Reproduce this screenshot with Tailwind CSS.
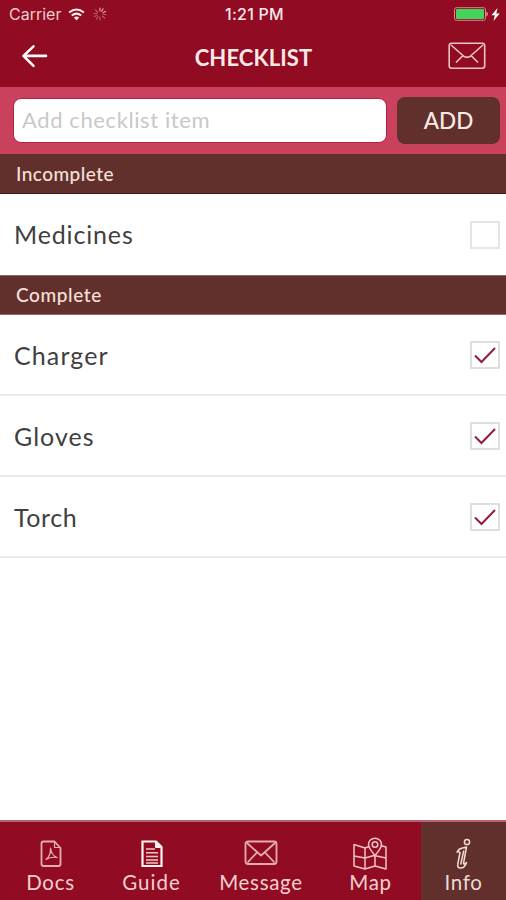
<!DOCTYPE html>
<html lang="en">
<head>
<meta charset="utf-8">
<title>Checklist</title>
<script src="https://cdn.jsdelivr.net/npm/@tailwindcss/browser@4"></script>
</head>
<body class="bg-white">
<div class="w-[506px] h-[900px] flex flex-col overflow-hidden bg-white font-['Lato',sans-serif] text-[#3f3f41]">
  <header class="h-[87px] shrink-0 bg-[#910b23] text-[#fbe9e8]">
    <div class="h-7 grid grid-cols-3 items-center pl-[9px] pr-[6px] font-['Inter',sans-serif] text-[16px] leading-7">
      <div class="flex items-center">
        <span class="w-[53px] text-[#f0cccd] whitespace-nowrap">Carrier</span>
        <svg class="ml-[6px] w-[17px] h-[13px]" viewBox="0 0 17 13" fill="none" stroke="#fbe9e8" stroke-width="2"><path d="M1 4.6Q8.500-1.600 16 4.600M3.700 7.500Q8.500 3.700 13.300 7.500"/><path d="M8.500 12.500 5.800 9.600Q8.500 7.500 11.200 9.600Z" fill="#fbe9e8" stroke="none"/></svg>
        <svg class="ml-2 w-[14px] h-[14px]" viewBox="0 0 14 14" stroke="#e4a5aa" stroke-width="1.200" stroke-linecap="round"><path d="M7 1v3M10 1.800 8.700 4.300M12.500 4.500 10 5.800"/><path stroke="#bd5b6b" d="M13 7.500h-3M11.800 11 9.600 9.200M7 13v-3M3.500 12 5 9.500M1.300 9.500 4 8.300M1 6.500h3M2.500 3 4.500 5"/></svg>
      </div>
      <span class="text-center font-medium tracking-[0.25px] whitespace-nowrap">1:21 PM</span>
      <div class="flex justify-end items-center">
        <svg class="w-[35px] h-[14px]" viewBox="0 0 35 14"><rect x=".5" y=".7" width="31" height="12.600" rx="2" fill="none" stroke="#d58a8d"/><rect x="2" y="2" width="28" height="10" rx="1" fill="#43d45c"/><path d="M32.500 4.500q2.500 2.500 0 5z" fill="#f3d0d0"/></svg>
        <svg class="ml-0.5 w-[9px] h-[13px]" viewBox="0 0 9 13" fill="#fff"><path d="M6.500 0 .5 7.200h3.300L2.500 13 8.700 5.500H5.300z"/></svg>
      </div>
    </div>
    <div class="h-[56px] grid grid-cols-3 items-center pl-[21px] pr-5">
      <svg class="w-[27px] h-6" viewBox="0 0 27 24" fill="none" stroke="#fff" stroke-width="2.600" stroke-linecap="round" stroke-linejoin="round"><path d="M25 11.900H3M12.500 2.400 2.500 11.900 12.500 21.900"/></svg>
      <h1 class="pt-[3px] text-center text-[22px] leading-7 font-bold tracking-[0.1px] whitespace-nowrap">CHECKLIST</h1>
      <svg class="justify-self-end w-[38px] h-7" viewBox="0 0 38 28" fill="none" stroke="#efc3c5" stroke-width="1.600" stroke-linejoin="round"><rect x="1.200" y="1.200" width="35.500" height="25" rx="2.500"/><path d="M3 3 15.500 14q1.300 1.400 2.300.8 1.200 1.200 2.400 0 1 .6 2.300-.8L35 3M8 20.500l7-7M30 20.500l-7-7"/></svg>
    </div>
  </header>

  <form class="h-[67px] shrink-0 bg-[#c9415d] flex items-start pt-[11px] pl-[13px] pr-[6px]">
    <input type="text" placeholder="Add checklist item" class="block w-[374px] h-[45px] rounded-lg border border-[#b91d48] bg-white px-2 text-[22px] leading-7 pb-[3px] tracking-[0.6px] placeholder:text-[#c8c8ca]">
    <button type="button" class="ml-[10px] w-[103px] h-[47px] -mt-px rounded-lg bg-[#61302d] text-[#faeae2] text-[22.5px] leading-7 font-medium">ADD</button>
  </form>

  <h2 class="h-10 shrink-0 bg-[#61302d] border-b border-[#401512] px-4 text-[19px] leading-[40px] tracking-[0.45px] text-[#f7e0d9] font-medium">Incomplete</h2>
  <div class="h-[81px] shrink-0 flex items-center justify-between pl-[14px] pr-[6px]">
    <span class="pb-0.5 text-[25px] leading-8 tracking-[0.85px]">Medicines</span>
    <span class="w-[30px] h-[28px] border-2 border-[#e5e5e6]"></span>
  </div>
  <h2 class="h-10 shrink-0 bg-[#61302d] border-y border-[#8c6965] px-4 text-[19px] leading-[38px] tracking-[0.6px] text-[#f7e0d9] font-medium">Complete</h2>
  <div class="h-[81px] shrink-0 flex items-center justify-between pl-[14px] pr-[6px] border-b-2 border-[#ebebec]">
    <span class="text-[25px] leading-8 tracking-[1.1px]">Charger</span>
    <span class="w-[30px] h-[28px] border-2 border-[#dfdfe0]"><svg class="w-[26px] h-6" viewBox="0 0 26 24" fill="none" stroke="#951b38" stroke-width="2"><path d="M3 12.500 9.500 19 23 5"/></svg></span>
  </div>
  <div class="h-[81px] shrink-0 flex items-center justify-between pl-[14px] pr-[6px] border-b-2 border-[#ebebec]">
    <span class="text-[25px] leading-8 tracking-[1px]">Gloves</span>
    <span class="w-[30px] h-[28px] border-2 border-[#dfdfe0]"><svg class="w-[26px] h-6" viewBox="0 0 26 24" fill="none" stroke="#951b38" stroke-width="2"><path d="M3 12.500 9.500 19 23 5"/></svg></span>
  </div>
  <div class="h-[81px] shrink-0 flex items-center justify-between pl-[14px] pr-[6px] border-b-2 border-[#ebebec]">
    <span class="text-[25px] leading-8 tracking-[0.6px]">Torch</span>
    <span class="w-[30px] h-[28px] border-2 border-[#dfdfe0]"><svg class="w-[26px] h-6" viewBox="0 0 26 24" fill="none" stroke="#951b38" stroke-width="2"><path d="M3 12.500 9.500 19 23 5"/></svg></span>
  </div>

  <nav class="mt-auto h-[80px] shrink-0 border-t-2 border-[#b9616e] bg-[#910b23] flex text-[20.5px] leading-6 tracking-[0.7px] text-[#f4cfd0]">
    <div class="w-[101px] flex flex-col items-center pt-[18px]">
      <svg class="w-[22px] h-[28px]" viewBox="0 0 22 28" fill="none" stroke="#e7aeb2" stroke-width="1.800" stroke-linejoin="round"><path d="M3.500 1.500h11L20.500 8v16q0 2-2 2h-15q-2 0-2-2v-20.500q0-2 2-2z"/><path d="M14.500 2v5.500h5" stroke-width="1.200"/><path d="M6 19.500q5-4 4.500-11.500 1 7.500 6.500 9.500-6-1-11 2z" stroke-width="1.200"/></svg>
      <span class="mt-0.5 whitespace-nowrap">Docs</span>
    </div>
    <div class="w-[101px] flex flex-col items-center pt-[18px]">
      <svg class="w-[22px] h-[28px]" viewBox="0 0 22 28" fill="none" stroke="#fff1ee" stroke-width="2.200"><path d="M1.500 1.500h13.500L20.500 7v19h-19z"/><path d="M14.500 2v5.500h6z" fill="#fff1ee" stroke-width="1"/><path d="M5 9h9M5 12.700h12M5 16.400h12M5 20.100h12M5 23h12" stroke-width="1.500" stroke="#f3c6c7"/></svg>
      <span class="mt-0.5 tracking-[1px] whitespace-nowrap">Guide</span>
    </div>
    <div class="w-[118px] flex flex-col items-center pt-[17px]">
      <svg class="w-[34px] h-[28px]" viewBox="0 0 34 28" fill="none" stroke="#e7aeb2" stroke-width="1.800" stroke-linejoin="round"><rect x="1.500" y="2.500" width="31" height="22.500" rx="2.500"/><path d="M3 4 13 13l4 3.500 4-3.500L31 4M3.500 23.500 13 13.500M30.500 23.500 21 13.500"/></svg>
      <span class="mt-[3px] whitespace-nowrap">Message</span>
    </div>
    <div class="w-[101px] flex flex-col items-center pt-[15px]">
      <svg class="w-[36px] h-[34px] mr-0.5" viewBox="0 0 36 34" fill="none" stroke="#f0c3c4" stroke-width="1.500" stroke-linejoin="round"><path d="M17 9.500 13 11 2 7.500V29l11 3 10-3 11 3V10l-5.500-1.500M13 11v21M23 19v10M2 19l11 2 9-2.500 12 2.500"/><path d="M23 18.500Q16.500 11 16.500 7.500a6.500 6.300 0 0 1 13 0Q29.500 11 23 18.500z"/><circle cx="23" cy="7.500" r="2.800"/></svg>
      <span class="-mt-px whitespace-nowrap">Map</span>
    </div>
    <div class="w-[85px] bg-[#61302d] flex flex-col items-center pt-4 text-[#eed8d1]">
      <svg class="w-[16px] h-[32px] mr-0.5" viewBox="0 0 16 32" fill="none" stroke="#f3ded7" stroke-width="1.500" stroke-linejoin="round"><circle cx="12" cy="4" r="2.600"/><path d="M2 14Q4 10.500 7.500 10L11.500 9 8.500 25.500Q9 27 11.500 24.500 10 30 5.500 30 2 30 2.800 26L5 14.500Q4 13.500 2 14zM8.800 12.500 5.700 26.500"/></svg>
      <span class="whitespace-nowrap">Info</span>
    </div>
  </nav>
</div>
</body>
</html>
